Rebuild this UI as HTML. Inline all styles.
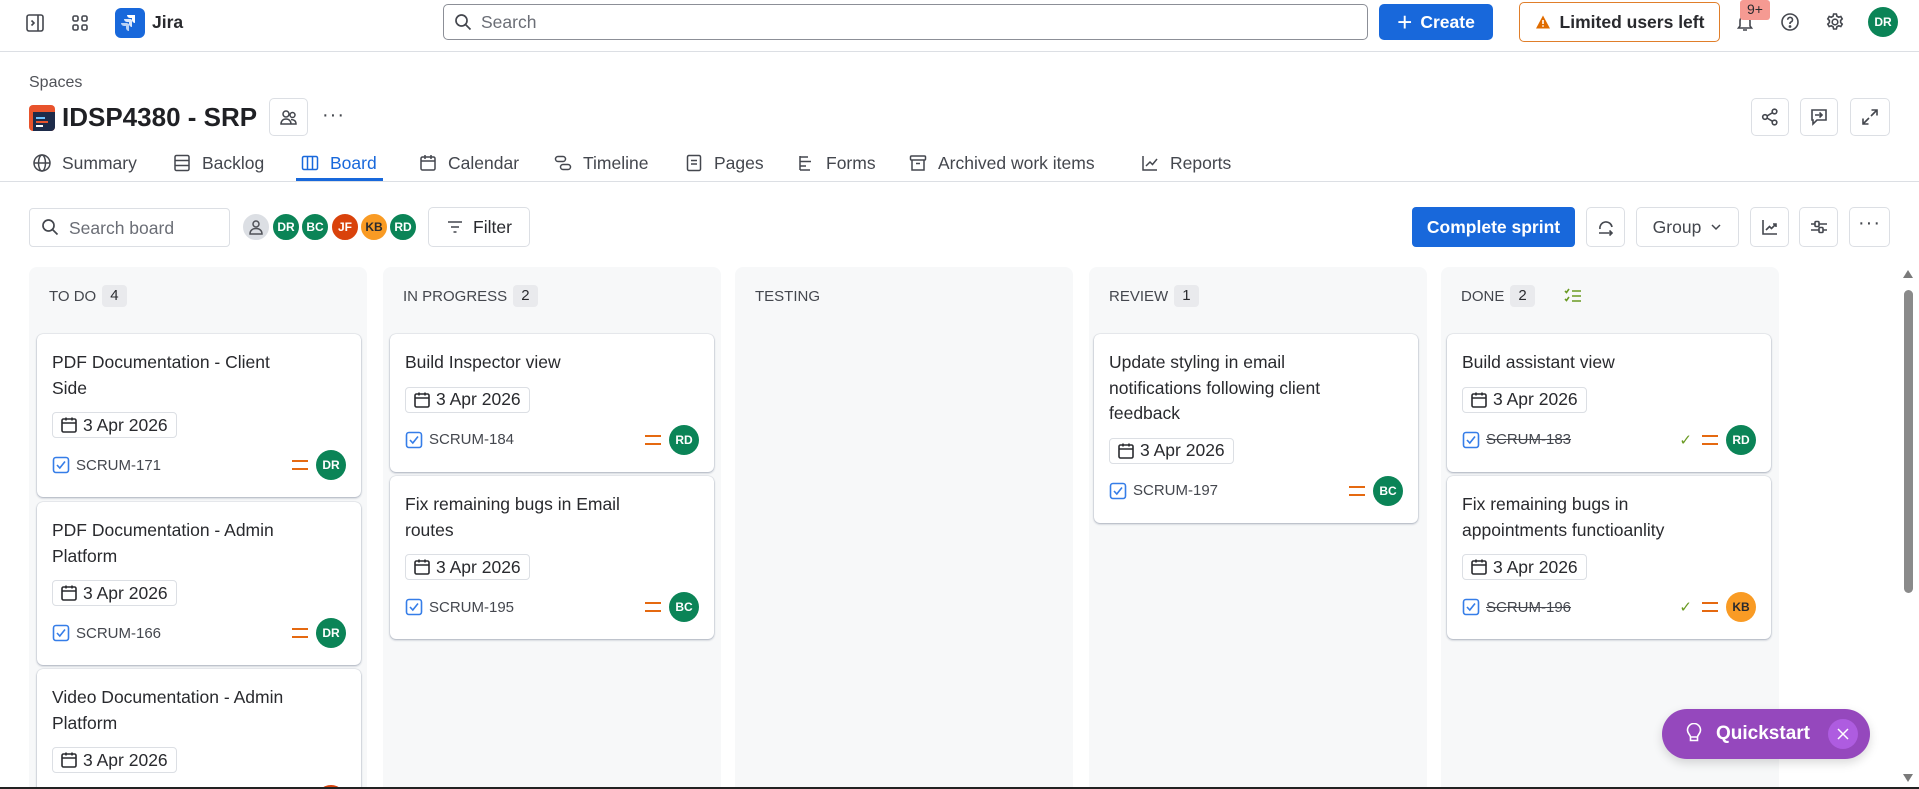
<!DOCTYPE html>
<html><head><meta charset="utf-8"><style>
*{box-sizing:border-box;margin:0;padding:0}
html,body{width:1919px;height:789px;overflow:hidden}
body{background:#fff;font-family:"Liberation Sans",sans-serif;color:#292a2e}
#w{position:relative;width:1919px;height:789px;overflow:hidden}
.a{position:absolute}
.ic{position:absolute;display:flex;align-items:center;justify-content:center}
svg{display:block}
.btn{position:absolute;border:1px solid #dcdfe4;border-radius:5px;background:#fff;display:flex;align-items:center;justify-content:center}
.tab{position:absolute;top:150px;height:26px;display:flex;align-items:center;font-size:17.5px;color:#44474e;white-space:nowrap}
.tab svg{margin-right:10px}
.av{position:absolute;width:30px;height:30px;border-radius:50%;color:#fff;font-size:12px;font-weight:bold;display:flex;align-items:center;justify-content:center;border:2px solid #fff}
.col{position:absolute;top:267px;width:338px;height:522px;background:#f7f8f9;border-radius:8px 8px 0 0}
.ch{position:absolute;left:20px;top:285px;font-size:15px;color:#44474e;display:flex;align-items:center;height:22px}
.cnt{background:#e9eaed;border-radius:4px;padding:0 8px;height:22px;line-height:22px;margin-left:6px;font-size:15px;color:#292a2e}
.card{position:absolute;width:324px;background:#fff;border-radius:6px;box-shadow:0 1px 2px rgba(9,30,66,.3),0 0 1px rgba(9,30,66,.3);padding:16px 15px 17px 15px}
.t{font-size:17.5px;line-height:25.5px;color:#292a2e;white-space:nowrap}
.d{margin-top:11px;display:inline-flex;align-items:center;height:26px;border:1px solid #dcdfe4;border-radius:4px;padding:0 8px 0 7px;font-size:17.5px;color:#292a2e}
.d svg{margin-right:5px}
.k{margin-top:11px;height:30px;display:flex;align-items:center;font-size:15px;color:#44474e;position:relative}
.k svg{margin-right:6px}
.k .r{position:absolute;right:0;top:0;display:flex;align-items:center;height:30px}
.k .r .av2{width:30px;height:30px;border-radius:50%;color:#fff;font-size:12px;font-weight:bold;display:flex;align-items:center;justify-content:center;margin-left:8px}
.pr{width:16px;height:10px;border-top:2.5px solid #e56910;border-bottom:2.5px solid #e56910}
.s{text-decoration:line-through}
</style></head><body><div id="w">

<!-- top bar -->
<div class="ic" style="left:23px;top:11px;width:24px;height:24px"><svg width="20" height="20" viewBox="0 0 20 20" fill="none" stroke="#44474e" stroke-width="1.6"><rect x="2" y="2" width="16" height="16" rx="2"/><path d="M13 2v16M6.5 7.5l2.5 2.5-2.5 2.5"/></svg></div>
<div class="ic" style="left:68px;top:11px;width:24px;height:24px"><svg width="20" height="20" viewBox="0 0 20 20" fill="none" stroke="#44474e" stroke-width="1.6"><rect x="3" y="3" width="5" height="5" rx="1.5"/><rect x="12" y="3" width="5" height="5" rx="1.5"/><rect x="3" y="12" width="5" height="5" rx="1.5"/><rect x="12" y="12" width="5" height="5" rx="1.5"/></svg></div>
<div class="a" style="left:115px;top:8px;width:30px;height:30px;background:#1868db;border-radius:6px"><svg width="30" height="30" viewBox="0 0 30 30" fill="#fff"><path d="M20 7h-8a3 3 0 0 0 3 3h2v2a3 3 0 0 0 3 3z"/><path d="M16 11h-7a3 3 0 0 0 3 3h2v2a3 3 0 0 0 3 3v-7z" opacity=".85"/><path d="M12 15H6a3 3 0 0 0 3 3h2v2a3 3 0 0 0 3 3v-7z" opacity=".7"/></svg></div>
<div class="a" style="left:152px;top:12px;font-size:17.5px;font-weight:bold;color:#292a2e">Jira</div>

<div class="a" style="left:443px;top:4px;width:925px;height:36px;border:1px solid #8c8f97;border-radius:5px"></div>
<div class="ic" style="left:452px;top:11px;width:22px;height:22px"><svg width="18" height="18" viewBox="0 0 18 18" fill="none" stroke="#44474e" stroke-width="1.7"><circle cx="7.5" cy="7.5" r="5.5"/><path d="M11.5 11.5l5 5"/></svg></div>
<div class="a" style="left:481px;top:12px;font-size:17.5px;color:#6b6e76">Search</div>

<div class="a" style="left:1379px;top:4px;width:114px;height:36px;background:#1868db;border-radius:5px;color:#fff;font-size:17.5px;font-weight:bold;display:flex;align-items:center;justify-content:center"><span style="font-size:26px;font-weight:normal;margin-right:8px;line-height:20px">+</span>Create</div>

<div class="a" style="left:1519px;top:2px;width:201px;height:40px;border:1px solid #e07e2a;border-radius:5px;display:flex;align-items:center;justify-content:center;font-size:17.5px;font-weight:bold;color:#292a2e"><svg width="16" height="16" viewBox="0 0 16 16" style="margin-right:9px"><path d="M8 1.5L15 14.5H1z" fill="#e06c00"/><path d="M8 6v4" stroke="#fff" stroke-width="1.6"/><circle cx="8" cy="12" r=".9" fill="#fff"/></svg>Limited users left</div>

<div class="ic" style="left:1734px;top:11px;width:22px;height:22px"><svg width="20" height="20" viewBox="0 0 20 20" fill="none" stroke="#44474e" stroke-width="1.6"><path d="M5 14V9a5 5 0 0 1 10 0v5l1.5 2h-13zM8 18h4"/></svg></div>
<div class="a" style="left:1740px;top:0;width:30px;height:20px;background:#f59a92;border-radius:3px;font-size:14px;color:#292a2e;text-align:center;line-height:19px">9+</div>
<div class="ic" style="left:1779px;top:11px;width:22px;height:22px"><svg width="20" height="20" viewBox="0 0 20 20" fill="none" stroke="#44474e" stroke-width="1.6"><circle cx="10" cy="10" r="8"/><path d="M7.7 7.8a2.4 2.4 0 1 1 3.3 2.2c-.7.3-1 .8-1 1.5v.5"/><circle cx="10" cy="14.5" r=".6" fill="#44474e"/></svg></div>
<div class="ic" style="left:1824px;top:11px;width:22px;height:22px"><svg width="20" height="20" viewBox="0 0 20 20" fill="none" stroke="#44474e" stroke-width="1.6"><circle cx="10" cy="10" r="2.8"/><path d="M8.6 2h2.8l.5 2.2 1.8 1 2.1-.7 1.4 2.4-1.6 1.6v2l1.6 1.6-1.4 2.4-2.1-.7-1.8 1-.5 2.2H8.6l-.5-2.2-1.8-1-2.1.7-1.4-2.4 1.6-1.6v-2L2.8 6.9l1.4-2.4 2.1.7 1.8-1z"/></svg></div>
<div class="a" style="left:1868px;top:7px;width:30px;height:30px;border-radius:50%;background:#0b8457;color:#fff;font-size:12px;font-weight:bold;display:flex;align-items:center;justify-content:center">DR</div>
<div class="a" style="left:0;top:51px;width:1919px;height:1px;background:#dcdfe4"></div>

<!-- header -->
<div class="a" style="left:29px;top:74px;font-size:16px;color:#505258">Spaces</div>
<div class="a" style="left:29px;top:105px;width:26px;height:26px;border-radius:4px;background:#e8532c;overflow:hidden"><div style="position:absolute;left:4px;top:7px;width:22px;height:19px;background:#1d2b4a"></div><div style="position:absolute;left:7px;top:12px;width:9px;height:2px;background:#6cc3ff"></div><div style="position:absolute;left:7px;top:16px;width:12px;height:2px;background:#e8532c"></div><div style="position:absolute;left:7px;top:20px;width:7px;height:2px;background:#fff"></div></div>
<div class="a" style="left:62px;top:102px;font-size:26px;font-weight:bold;color:#1f2024">IDSP4380 - SRP</div>
<div class="btn" style="left:269px;top:98px;width:39px;height:38px"><svg width="20" height="20" viewBox="0 0 20 20" fill="none" stroke="#44474e" stroke-width="1.5"><circle cx="7" cy="7" r="3"/><circle cx="13.5" cy="8" r="2.5"/><path d="M2 17c0-3 2-5 5-5s5 2 5 5zM12 12.5c3 0 5 1.5 5 4.5h-5"/></svg></div>
<div class="a" style="left:322px;top:104px;font-size:20px;color:#44474e;letter-spacing:1px">···</div>
<div class="btn" style="left:1751px;top:98px;width:38px;height:38px"><svg width="20" height="20" viewBox="0 0 20 20" fill="none" stroke="#44474e" stroke-width="1.6"><circle cx="5" cy="10" r="2.3"/><circle cx="14.5" cy="4.5" r="2.3"/><circle cx="14.5" cy="15.5" r="2.3"/><path d="M7 9l5.5-3.3M7 11l5.5 3.3"/></svg></div>
<div class="btn" style="left:1800px;top:98px;width:38px;height:38px"><svg width="20" height="20" viewBox="0 0 20 20" fill="none" stroke="#44474e" stroke-width="1.6"><path d="M3 3h14v10H8l-4 4v-4H3z"/><path d="M6 8h7M10.5 5.5L13 8l-2.5 2.5"/></svg></div>
<div class="btn" style="left:1850px;top:98px;width:40px;height:38px"><svg width="20" height="20" viewBox="0 0 20 20" fill="none" stroke="#44474e" stroke-width="1.6"><path d="M11.5 3H17v5.5M17 3l-6 6M8.5 17H3v-5.5M3 17l6-6"/></svg></div>

<!-- tabs -->
<div class="tab" style="left:32px"><svg width="20" height="20" viewBox="0 0 20 20" fill="none" stroke="#44474e" stroke-width="1.5"><circle cx="10" cy="10" r="8"/><ellipse cx="10" cy="10" rx="3.5" ry="8"/><path d="M2 10h16"/></svg>Summary</div>
<div class="tab" style="left:172px"><svg width="20" height="20" viewBox="0 0 20 20" fill="none" stroke="#44474e" stroke-width="1.5"><rect x="3" y="2.5" width="14" height="15" rx="1.5"/><path d="M3 7.5h14M3 12.5h14"/></svg>Backlog</div>
<div class="tab" style="left:300px;color:#1868db"><svg width="20" height="20" viewBox="0 0 20 20" fill="none" stroke="#1868db" stroke-width="1.5"><rect x="2.5" y="3.5" width="15" height="13" rx="1.5"/><path d="M7.5 3.5v13M12.5 3.5v13"/></svg>Board</div>
<div class="a" style="left:296px;top:178px;width:87px;height:3px;background:#1868db"></div>
<div class="tab" style="left:418px"><svg width="20" height="20" viewBox="0 0 20 20" fill="none" stroke="#44474e" stroke-width="1.5"><rect x="3" y="4" width="14" height="13" rx="1.5"/><path d="M3 8h14M7 2v4M13 2v4"/></svg>Calendar</div>
<div class="tab" style="left:553px"><svg width="20" height="20" viewBox="0 0 20 20" fill="none" stroke="#44474e" stroke-width="1.5"><rect x="2.5" y="3.5" width="10" height="5" rx="2.5"/><rect x="7.5" y="11.5" width="10" height="5" rx="2.5"/></svg>Timeline</div>
<div class="tab" style="left:684px"><svg width="20" height="20" viewBox="0 0 20 20" fill="none" stroke="#44474e" stroke-width="1.5"><rect x="3.5" y="2.5" width="13" height="15" rx="1.5"/><path d="M7 7.5h6M7 11h6"/></svg>Pages</div>
<div class="tab" style="left:796px"><svg width="20" height="20" viewBox="0 0 20 20" fill="none" stroke="#44474e" stroke-width="1.5"><path d="M4 3v14M4 4h8M4 8.5h11M4 13h6M4 17h10"/></svg>Forms</div>
<div class="tab" style="left:908px"><svg width="20" height="20" viewBox="0 0 20 20" fill="none" stroke="#44474e" stroke-width="1.5"><rect x="2.5" y="3" width="15" height="4" rx="1"/><path d="M4 7v10h12V7M8 10.5h4"/></svg>Archived work items</div>
<div class="tab" style="left:1140px"><svg width="20" height="20" viewBox="0 0 20 20" fill="none" stroke="#44474e" stroke-width="1.5"><path d="M3 3v14h14M6 13l4-4 2.5 2.5L17 6"/></svg>Reports</div>
<div class="a" style="left:0;top:181px;width:1919px;height:1px;background:#dcdfe4"></div>

<!-- toolbar -->
<div class="a" style="left:29px;top:208px;width:201px;height:39px;border:1px solid #dcdfe4;border-radius:4px"></div>
<div class="ic" style="left:40px;top:217px;width:20px;height:20px"><svg width="18" height="18" viewBox="0 0 18 18" fill="none" stroke="#44474e" stroke-width="1.7"><circle cx="7.5" cy="7.5" r="5.5"/><path d="M11.5 11.5l5 5"/></svg></div>
<div class="a" style="left:69px;top:218px;font-size:17.5px;color:#6b6e76">Search board</div>
<div class="av" style="left:241px;top:212px;background:#dcdfe4"><svg width="18" height="18" viewBox="0 0 18 18" fill="none" stroke="#505258" stroke-width="1.5"><circle cx="9" cy="6" r="3"/><path d="M3 16c0-3.5 2.5-5.5 6-5.5s6 2 6 5.5z"/></svg></div>
<div class="av" style="left:271px;top:212px;background:#0b8457">DR</div>
<div class="av" style="left:300px;top:212px;background:#0b8457">BC</div>
<div class="av" style="left:330px;top:212px;background:#d9420b">JF</div>
<div class="av" style="left:359px;top:212px;background:#f99b24;color:#292a2e">KB</div>
<div class="av" style="left:388px;top:212px;background:#0b8457">RD</div>
<div class="btn" style="left:428px;top:207px;width:102px;height:40px;font-size:17.5px;color:#292a2e"><svg width="18" height="18" viewBox="0 0 18 18" fill="none" stroke="#44474e" stroke-width="1.6" style="margin-right:9px"><path d="M2 4h14M5 9h8M7.5 14h3"/></svg>Filter</div>

<div class="a" style="left:1412px;top:207px;width:163px;height:40px;background:#1868db;border-radius:4px;color:#fff;font-size:17.5px;font-weight:bold;display:flex;align-items:center;justify-content:center">Complete sprint</div>
<div class="btn" style="left:1586px;top:207px;width:39px;height:40px"><svg width="20" height="20" viewBox="0 0 20 20" fill="none" stroke="#44474e" stroke-width="1.6"><path d="M4 12A6 6 0 1 1 16 10M3 16h13M13.5 13.5L16 16l-2.5 2.5"/></svg></div>
<div class="btn" style="left:1636px;top:207px;width:103px;height:40px;font-size:17.5px;color:#44474e">Group<svg width="12" height="12" viewBox="0 0 12 12" fill="none" stroke="#44474e" stroke-width="1.5" style="margin-left:9px"><path d="M2 4l4 4 4-4"/></svg></div>
<div class="btn" style="left:1750px;top:207px;width:39px;height:40px"><svg width="20" height="20" viewBox="0 0 20 20" fill="none" stroke="#44474e" stroke-width="1.6"><path d="M3 3v14h14M6 13l3.5-3.5 2 2L16 7M13 7h3v3"/></svg></div>
<div class="btn" style="left:1799px;top:207px;width:39px;height:40px"><svg width="20" height="20" viewBox="0 0 20 20" fill="none" stroke="#44474e" stroke-width="1.6"><path d="M2 7h4M10 7h8M2 13h8M14 13h4"/><rect x="6" y="4.5" width="4" height="5" rx="1"/><rect x="10" y="10.5" width="4" height="5" rx="1"/></svg></div>
<div class="btn" style="left:1849px;top:207px;width:41px;height:40px;font-size:20px;color:#44474e;letter-spacing:1px;padding-bottom:8px">···</div>

<!-- columns -->
<div class="col" style="left:29px"><div class="ch" style="top:18px">TO DO<span class="cnt">4</span></div></div>
<div class="col" style="left:383px"><div class="ch" style="top:18px">IN PROGRESS<span class="cnt">2</span></div></div>
<div class="col" style="left:735px"><div class="ch" style="top:18px">TESTING</div></div>
<div class="col" style="left:1089px"><div class="ch" style="top:18px">REVIEW<span class="cnt">1</span></div></div>
<div class="col" style="left:1441px"><div class="ch" style="top:18px">DONE<span class="cnt">2</span><svg width="20" height="18" viewBox="0 0 20 18" fill="none" stroke="#6a9a23" stroke-width="1.6" style="margin-left:28px"><path d="M2 4l1.5 1.5L6 2M2 12l1.5 1.5L6 10M9 4h9M9 9h9M9 14h9"/></svg></div></div>

<svg width="0" height="0" style="position:absolute"><defs>
<symbol id="cal" viewBox="0 0 18 18"><g fill="none" stroke="#292a2e" stroke-width="1.6"><rect x="2" y="3" width="14" height="13" rx="1.5"/><path d="M2 7h14M6 1.5v3M12 1.5v3"/></g></symbol>
<symbol id="chk" viewBox="0 0 18 18"><rect x="1.5" y="1.5" width="15" height="15" rx="2.5" fill="none" stroke="#357de8" stroke-width="1.6"/><path d="M5 9l2.8 3L13 5.5" fill="none" stroke="#357de8" stroke-width="1.6"/></symbol>
</defs></svg>

<!-- TODO cards -->
<div class="card" style="left:37px;top:334px"><div class="t">PDF Documentation - Client<br>Side</div><div class="d"><svg width="18" height="18"><use href="#cal"/></svg>3 Apr 2026</div><div class="k"><svg width="18" height="18"><use href="#chk"/></svg>SCRUM-171<div class="r"><div class="pr"></div><div class="av2" style="background:#0b8457">DR</div></div></div></div>
<div class="card" style="left:37px;top:502px"><div class="t">PDF Documentation - Admin<br>Platform</div><div class="d"><svg width="18" height="18"><use href="#cal"/></svg>3 Apr 2026</div><div class="k"><svg width="18" height="18"><use href="#chk"/></svg>SCRUM-166<div class="r"><div class="pr"></div><div class="av2" style="background:#0b8457">DR</div></div></div></div>
<div class="a" style="left:30px;top:660px;width:340px;height:127px;overflow:hidden">
<div class="card" style="left:7px;top:9px"><div class="t">Video Documentation - Admin<br>Platform</div><div class="d"><svg width="18" height="18"><use href="#cal"/></svg>3 Apr 2026</div><div class="k"><svg width="18" height="18"><use href="#chk"/></svg>SCRUM-170<div class="r"><div class="pr"></div><div class="av2" style="background:#d9420b">JF</div></div></div></div>
</div>

<!-- IN PROGRESS -->
<div class="card" style="left:390px;top:334px"><div class="t">Build Inspector view</div><div class="d"><svg width="18" height="18"><use href="#cal"/></svg>3 Apr 2026</div><div class="k"><svg width="18" height="18"><use href="#chk"/></svg>SCRUM-184<div class="r"><div class="pr"></div><div class="av2" style="background:#0b8457">RD</div></div></div></div>
<div class="card" style="left:390px;top:476px"><div class="t">Fix remaining bugs in Email<br>routes</div><div class="d"><svg width="18" height="18"><use href="#cal"/></svg>3 Apr 2026</div><div class="k"><svg width="18" height="18"><use href="#chk"/></svg>SCRUM-195<div class="r"><div class="pr"></div><div class="av2" style="background:#0b8457">BC</div></div></div></div>

<!-- REVIEW -->
<div class="card" style="left:1094px;top:334px"><div class="t">Update styling in email<br>notifications following client<br>feedback</div><div class="d"><svg width="18" height="18"><use href="#cal"/></svg>3 Apr 2026</div><div class="k"><svg width="18" height="18"><use href="#chk"/></svg>SCRUM-197<div class="r"><div class="pr"></div><div class="av2" style="background:#0b8457">BC</div></div></div></div>

<!-- DONE -->
<div class="card" style="left:1447px;top:334px"><div class="t">Build assistant view</div><div class="d"><svg width="18" height="18"><use href="#cal"/></svg>3 Apr 2026</div><div class="k"><svg width="18" height="18"><use href="#chk"/></svg><span class="s">SCRUM-183</span><div class="r"><span style="color:#6a9a23;font-size:15px;margin-right:10px">✓</span><div class="pr"></div><div class="av2" style="background:#0b8457">RD</div></div></div></div>
<div class="card" style="left:1447px;top:476px"><div class="t">Fix remaining bugs in<br>appointments functioanlity</div><div class="d"><svg width="18" height="18"><use href="#cal"/></svg>3 Apr 2026</div><div class="k"><svg width="18" height="18"><use href="#chk"/></svg><span class="s">SCRUM-196</span><div class="r"><span style="color:#6a9a23;font-size:15px;margin-right:10px">✓</span><div class="pr"></div><div class="av2" style="background:#f99b24;color:#292a2e">KB</div></div></div></div>

<!-- scrollbar -->
<div class="a" style="left:1903px;top:270px;width:0;height:0;border-left:5px solid transparent;border-right:5px solid transparent;border-bottom:8px solid #7a7a7a"></div>
<div class="a" style="left:1904px;top:290px;width:9px;height:303px;background:#8a8a8a;border-radius:5px"></div>
<div class="a" style="left:1903px;top:774px;width:0;height:0;border-left:5px solid transparent;border-right:5px solid transparent;border-top:8px solid #7a7a7a"></div>

<!-- quickstart -->
<div class="a" style="left:1662px;top:709px;width:208px;height:50px;border-radius:25px;background:#9548bd;box-shadow:0 4px 10px rgba(0,0,0,.15);color:#fff;font-size:19px;font-weight:bold;display:flex;align-items:center"><svg width="20" height="22" viewBox="0 0 20 22" fill="none" stroke="#fff" stroke-width="1.6" style="margin-left:22px;margin-right:12px"><path d="M6.5 14c0-2-3-3.5-3-7a6.5 6.5 0 0 1 13 0c0 3.5-3 5-3 7zM6.5 14v3.5h7V14"/></svg>Quickstart<div style="position:absolute;right:12px;top:10px;width:30px;height:30px;border-radius:50%;background:#ae5ce0;display:flex;align-items:center;justify-content:center"><svg width="12" height="12" viewBox="0 0 12 12" stroke="#fff" stroke-width="1.5"><path d="M1 1l10 10M11 1L1 11"/></svg></div></div>
<div class="a" style="left:0;top:787px;width:1919px;height:2px;background:#222"></div>
</div></body></html>
